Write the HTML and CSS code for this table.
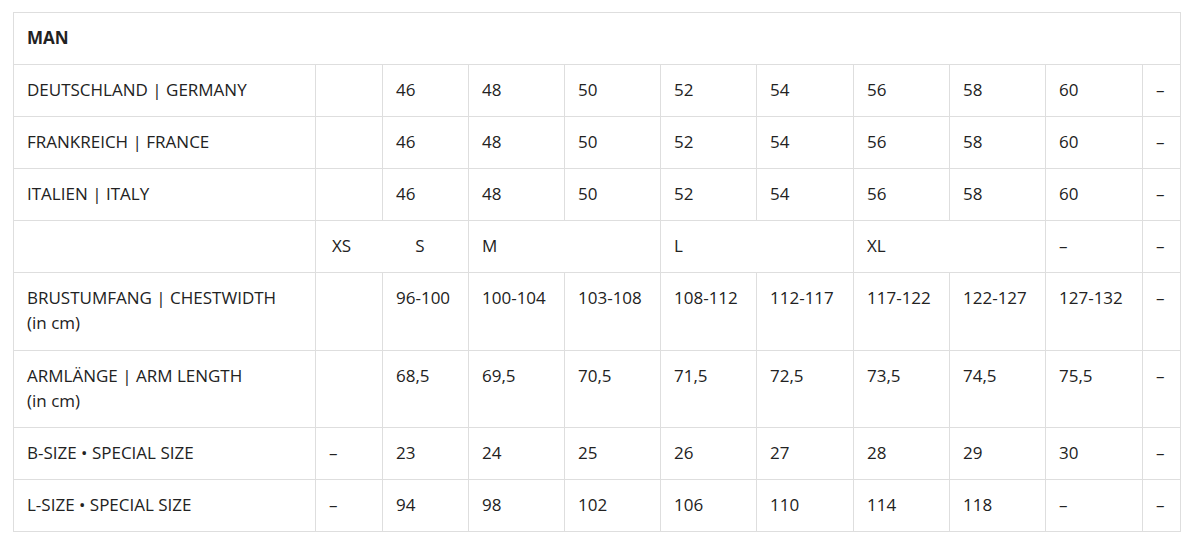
FILE: index.html
```html
<!DOCTYPE html>
<html lang="de">
<head>
<meta charset="utf-8">
<title>Size chart</title>
<link rel="stylesheet" href="styles.css">
</head>
<body>
<table class="size-table">
  <colgroup>
    <col class="c-label">
    <col class="c-xs">
    <col class="c-s">
    <col class="c-m">
    <col class="c-m">
    <col class="c-m">
    <col class="c-w">
    <col class="c-m">
    <col class="c-m">
    <col class="c-w">
    <col class="c-last">
  </colgroup>
  <tbody>
    <tr><th colspan="11" class="title">MAN</th></tr>
    <tr><td>DEUTSCHLAND | GERMANY</td><td></td><td>46</td><td>48</td><td>50</td><td>52</td><td>54</td><td>56</td><td>58</td><td>60</td><td>–</td></tr>
    <tr><td>FRANKREICH | FRANCE</td><td></td><td>46</td><td>48</td><td>50</td><td>52</td><td>54</td><td>56</td><td>58</td><td>60</td><td>–</td></tr>
    <tr><td>ITALIEN | ITALY</td><td></td><td>46</td><td>48</td><td>50</td><td>52</td><td>54</td><td>56</td><td>58</td><td>60</td><td>–</td></tr>
    <tr><td></td><td colspan="2"><span class="xs">XS</span><span class="s">S</span></td><td colspan="2">M</td><td colspan="2">L</td><td colspan="2">XL</td><td>–</td><td>–</td></tr>
    <tr class="tall"><td>BRUSTUMFANG | CHESTWIDTH<br>(in cm)</td><td></td><td>96-100</td><td>100-104</td><td>103-108</td><td>108-112</td><td>112-117</td><td>117-122</td><td>122-127</td><td>127-132</td><td>–</td></tr>
    <tr><td>ARMLÄNGE | ARM LENGTH<br>(in cm)</td><td></td><td>68,5</td><td>69,5</td><td>70,5</td><td>71,5</td><td>72,5</td><td>73,5</td><td>74,5</td><td>75,5</td><td>–</td></tr>
    <tr><td>B-SIZE • SPECIAL SIZE</td><td>–</td><td>23</td><td>24</td><td>25</td><td>26</td><td>27</td><td>28</td><td>29</td><td>30</td><td>–</td></tr>
    <tr><td>L-SIZE • SPECIAL SIZE</td><td>–</td><td>94</td><td>98</td><td>102</td><td>106</td><td>110</td><td>114</td><td>118</td><td>–</td><td>–</td></tr>
  </tbody>
</table>
</body>
</html>
```

FILE: styles.css
```css
html, body {
  margin: 0;
  background: #ffffff;
}
body {
  padding: 12px 0 0 13px;
  font-family: "Open Sans", "Liberation Sans", sans-serif;
  font-size: 17px;
  color: #222222;
}
.size-table {
  border-collapse: collapse;
  table-layout: fixed;
  width: 1168px;
}
.c-label { width: 302px; }
.c-xs { width: 67px; }
.c-s { width: 86px; }
.c-m { width: 96px; }
.c-w { width: 97px; }
.c-last { width: 38px; }
.size-table th,
.size-table td {
  border: 1px solid #dedede;
  padding: 12px 13px 14px;
  line-height: 25px;
  text-align: left;
  vertical-align: top;
  white-space: nowrap;
  font-weight: 400;
}
.size-table .tall td {
  padding-bottom: 15px;
}
.size-table th.title {
  font-weight: 700;
}
.xs {
  margin-left: 3px;
}
.s {
  margin-left: 64px;
}
```
